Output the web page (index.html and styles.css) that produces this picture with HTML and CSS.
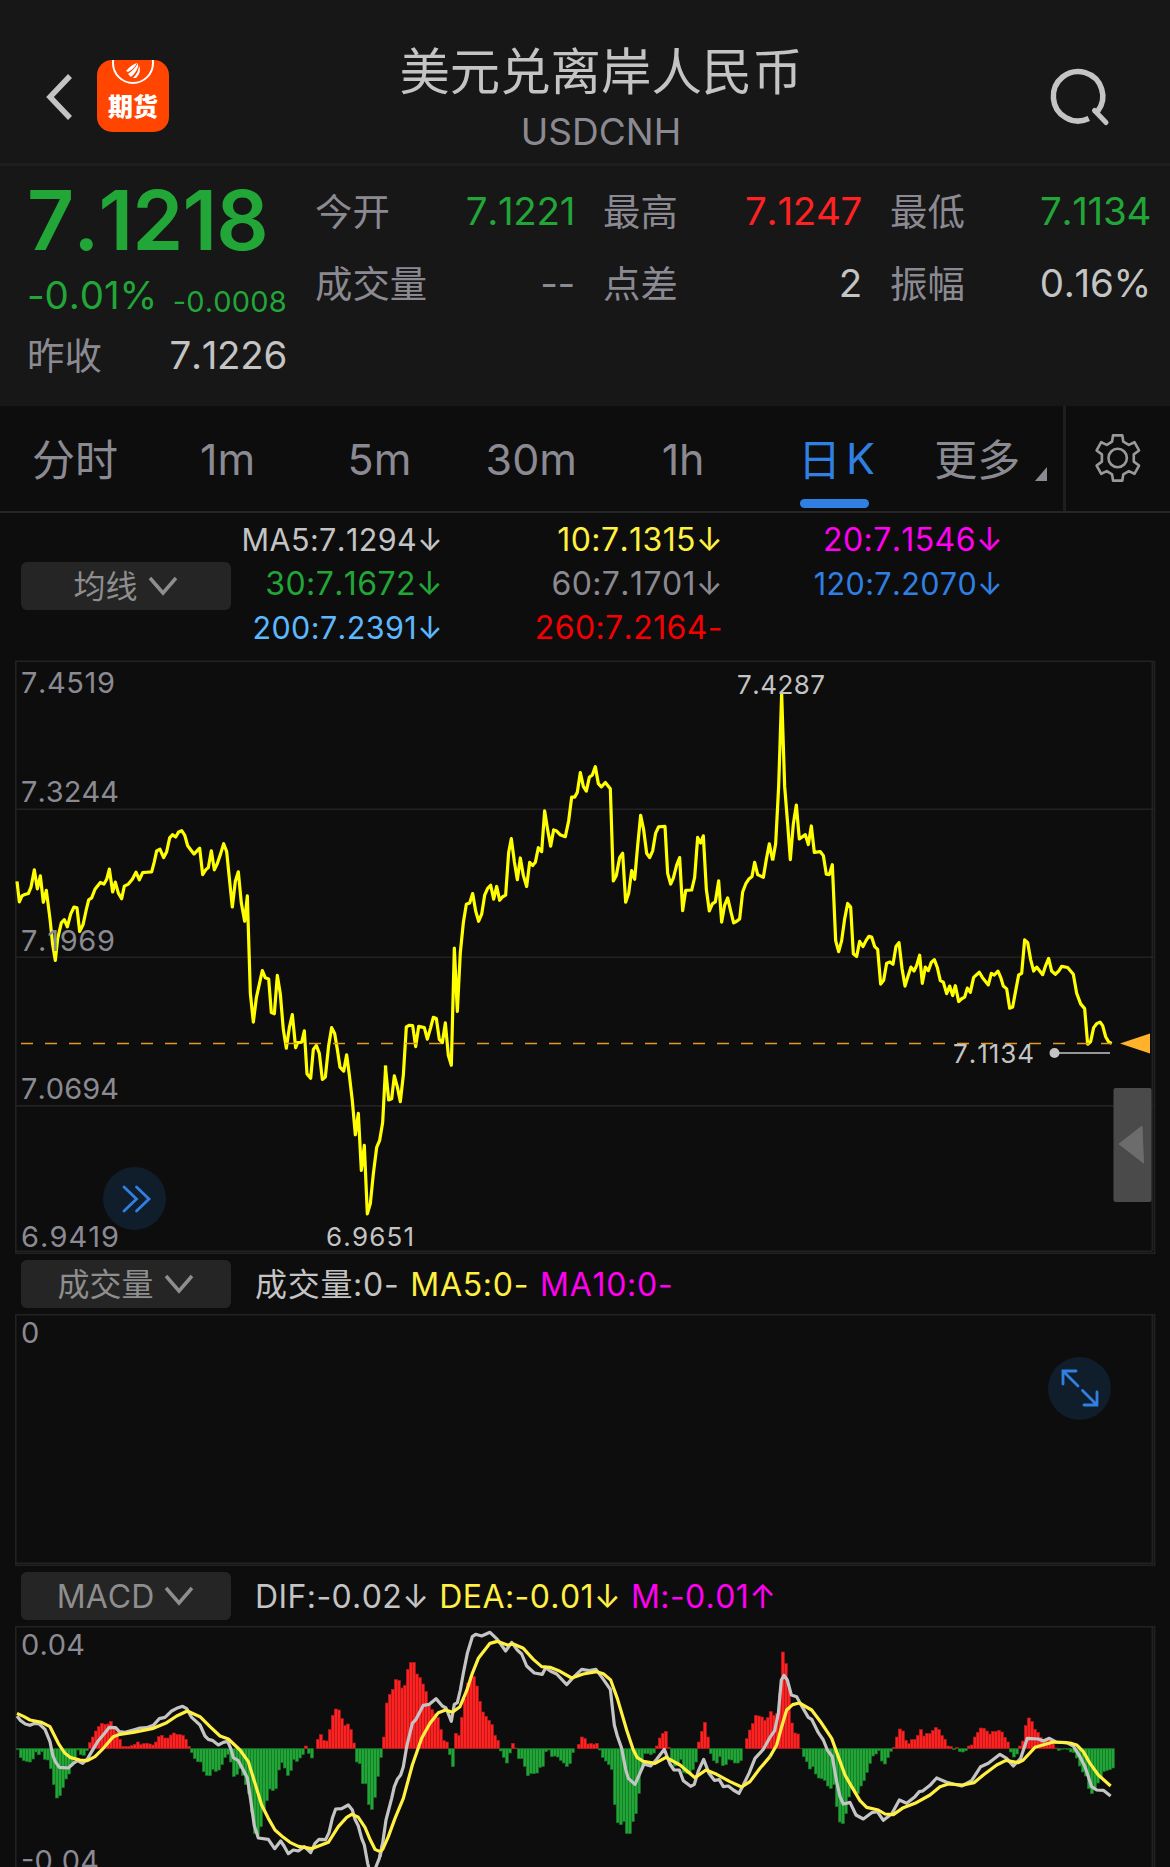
FILE: index.html
```html
<!DOCTYPE html>
<html lang="zh-CN">
<head>
    <meta charset="UTF-8">
    <meta name="viewport" content="width=device-width, initial-scale=1.0">
    <title>美元兑离岸人民币 USDCNH</title>
    <link rel="stylesheet" href="styles.css">
</head>
<body>
    <div class="header">
        <div class="header-left">
            <svg class="back" width="28" height="50" viewBox="0 0 28 50"><path d="M25 4 L5 25 L25 46"/></svg>
            <div class="logo">
                <svg width="72" height="34" viewBox="0 0 72 34">
                    <circle cx="36" cy="3" r="20" fill="none" stroke="#fff" stroke-width="2"/>
                    <path fill="#fff" d="M29 11 Q35 4 40 3 Q37 9 31 12 Z M31 14 Q38 9 41 3 Q42 10 34 17 Z M36 18 Q42 12 42 5 Q45 12 39 18 Z"/>
                </svg>
                <span>期货</span>
            </div>
        </div>
        <div class="title">
            <h1>美元兑离岸人民币</h1>
            <p>USDCNH</p>
        </div>
        <svg class="search" width="64" height="64" viewBox="0 0 64 64">
            <path d="M39.8 54.5 A24.7 24.7 0 1 1 48.5 47.5"/>
            <path d="M45.5 46.5 L57 58.5" stroke-width="5" stroke-linecap="round"/>
        </svg>
    </div>

    <div class="quote">
        <div class="quote-main">
            <div class="price">7.1218</div>
            <div class="change"><span>-0.01%</span><span class="diff">-0.0008</span></div>
            <div class="stat prev"><label>昨收</label><span>7.1226</span></div>
        </div>
        <div class="stats">
            <div class="stat"><label>今开</label><span class="green">7.1221</span></div>
            <div class="stat"><label>最高</label><span class="red">7.1247</span></div>
            <div class="stat"><label>最低</label><span class="green">7.1134</span></div>
            <div class="stat"><label>成交量</label><span class="gray">--</span></div>
            <div class="stat"><label>点差</label><span>2</span></div>
            <div class="stat"><label>振幅</label><span>0.16%</span></div>
        </div>
    </div>

    <div class="tabs">
        <div class="tab cn">分时</div>
        <div class="tab">1m</div>
        <div class="tab">5m</div>
        <div class="tab">30m</div>
        <div class="tab">1h</div>
        <div class="tab cn active"><span>日</span><span class="k">K</span></div>
        <div class="tab cn more">更多<i></i></div>
        <div class="settings">
            <svg width="48" height="52" viewBox="160 96 146 156">
                <path d="M218 105 H246 L249 124 L266 134 L283 126 L297 151 L281 163 V185 L297 197 L283 222 L266 214 L249 224 L246 243 H218 L215 224 L199 214 L182 222 L168 197 L184 185 V163 L168 151 L182 126 L199 134 L215 124 Z"/>
                <circle cx="232" cy="174" r="28"/>
            </svg>
        </div>
    </div>

    <div class="ma">
        <div class="picker"><span>均线</span><svg width="30" height="20" viewBox="0 0 30 20"><path d="M2 2 L15 17 L28 2"/></svg></div>
        <div class="ma-list">
            <span class="light fit">MA5:7.1294<b>↓</b></span>
            <span class="yellow">10:7.1315<b>↓</b></span>
            <span class="magenta">20:7.1546<b>↓</b></span>
            <span class="green">30:7.1672<b>↓</b></span>
            <span class="gray">60:7.1701<b>↓</b></span>
            <span class="blue fit">120:7.2070<b>↓</b></span>
            <span class="sky fit">200:7.2391<b>↓</b></span>
            <span class="pure-red">260:7.2164-</span>
        </div>
    </div>

    <!-- price -->
    <div class="panel price-panel">
        <svg width="1170" height="594" viewBox="0 660 1170 594">
            <g class="grid">
                <path d="M15 661.2 H1154 M15.8 661 V1253 M1152.3 661 V1251 M1154.6 661 V1254 M15 809.3 H1154 M15 957.2 H1154 M15 1105.9 H1154 M15 1251.3 H1152 M15 1253.3 H1154"/>
            </g>
            <g class="close" transform="translate(0 650) scale(.33333 .39541)">
                <polyline points="51,585 58,637 66,622 72,619 85,616 93,600 103,556 112,604 121,571 130,638 139,608 150,680 158,745 166,785 173,730 184,690 193,682 202,700 212,668 222,650 231,652 239,712 249,695 258,660 266,632 275,627 285,605 301,588 312,592 320,580 328,554 338,612 346,587 355,615 365,629 373,597 385,592 397,580 408,562 418,581 428,563 440,562 455,561 463,535 470,508 480,504 491,525 500,510 509,475 518,467 527,473 536,460 545,457 554,468 563,495 572,505 582,516 591,508 599,501 608,568 617,556 625,550 634,508 643,556 652,540 662,515 671,490 680,510 689,585 697,650 706,585 715,561 724,640 734,686 742,622 751,868 760,941 769,880 778,845 787,811 796,829 806,832 814,917 823,920 832,823 841,870 850,960 859,1007 868,955 877,922 887,1006 893,993 905,992 913,963 921,1072 932,1083 940,1010 949,1000 958,1020 967,1086 976,1080 986,1000 995,955 1004,970 1012,1010 1020,1055 1031,1065 1040,1024 1048,1075 1057,1140 1066,1226 1075,1172 1084,1316 1093,1253 1102,1426 1111,1400 1120,1325 1130,1258 1139,1240 1148,1195 1157,1051"/>
                <polyline transform="translate(1140 0)" points="16,1051 26,1138 35,1135 43,1077 52,1105 61,1142 70,1075 79,953 88,949 98,950 107,1003 116,952 133,955 142,984 152,955 160,929 169,932 178,985 187,993 196,943 205,1025 214,1050 223,754 232,914 241,765 250,690 259,643 269,640 278,616 287,660 296,686 305,668 314,620 323,603 332,595 341,630 350,598 359,633 368,624 377,620 386,512 394,477 403,535 412,581 421,526 430,570 440,598 449,537 458,545 466,537 475,500 485,510 494,407 503,455 512,496 521,455 530,458 540,467 556,472 566,432 575,372 584,372 592,360 601,310 610,345 619,357 628,322 637,316 646,295 655,338 664,346 676,335 691,351 700,584 709,570 719,525 728,514 737,638 746,615 755,558 764,580 773,495 782,418 791,455 800,514 809,525 818,508 827,463 836,447 855,446 863,565 872,592 880,577 890,544 899,525 908,659 917,608 935,607 944,575 953,474 962,488 970,470 979,605 988,660 997,642 1006,637 1016,584 1025,688 1034,645 1043,627 1052,660 1061,690 1070,686 1079,680 1088,612 1098,590 1106,580 1116,573 1124,537 1133,568 1150,575 1159,530 1168,490 1178,532"/>
                <polyline transform="translate(2310 0)" points="8,532 17,490 26,345 35,110 44,345 53,440 61,530 70,440 79,392 88,478 106,467 115,492 124,445 133,512 151,510 160,520 169,567 178,568 187,543 197,735 206,763 215,735 224,680 233,641 242,650 250,768 260,775 269,737 279,750 288,735 297,724 305,726 314,750 323,757 332,845 341,835 350,792 360,789 369,795 378,750 387,740 396,805 405,850 414,825 423,802 432,812 440,798 449,772 457,843 466,802 475,811 484,790 493,783 502,803 511,836 520,840 530,869 539,850 548,874 556,849 566,889 575,882 584,878 592,855 601,866 611,828 628,815 637,828 655,847 664,818 673,822 684,812 693,830 700,850 710,857 719,906 728,903 737,862 746,822 755,818 764,733 773,740 782,783 791,812 800,802 818,821 827,798 836,780 845,812 856,820 866,812 875,800 893,803 910,820 920,868 932,895 944,907 953,997 962,990 971,955 980,945 990,941 998,950 1007,978 1016,991 1025,995"/>
            </g>
            <path class="last-line" d="M21 1043.5 H1112"/>
            <path d="M1120 1043.5 L1150 1033.5 V1053.5 Z" fill="#ffb22a"/>
            <g class="axis">
                <text x="21" y="693" textLength="94">7.4519</text>
                <text x="21" y="802" textLength="98">7.3244</text>
                <text x="21" y="951" textLength="94">7.1969</text>
                <text x="21" y="1099" textLength="98">7.0694</text>
                <text x="21" y="1247" textLength="98">6.9419</text>
            </g>
            <g class="mark">
                <text x="737" y="694" textLength="88">7.4287</text>
                <text x="326" y="1246" textLength="88">6.9651</text>
                <text x="953" y="1063" textLength="81">7.1134</text>
                <circle cx="1054.5" cy="1053" r="5"/>
                <path d="M1054 1053 H1110"/>
            </g>
            <rect x="1113.5" y="1088" width="38" height="114" rx="2" fill="#4a4a4a"/>
            <path d="M1119 1144 L1142 1126 L1143.5 1163 Z" fill="#6c6c6c" stroke="#6c6c6c" stroke-linejoin="round"/>
        </svg>
        <div class="round-btn forward">
            <svg width="63" height="63" viewBox="0 0 63 63"><path d="M21 20 L33.5 32 L21 44 M33.5 20 L46 32 L33.5 44"/></svg>
        </div>
    </div>

    <!-- volume -->
    <div class="row">
        <div class="picker"><span>成交量</span><svg width="30" height="20" viewBox="0 0 30 20"><path d="M2 2 L15 17 L28 2"/></svg></div>
        <div class="legend vol"><span class="light">成交量:0-</span><span class="yellow">MA5:0-</span><span class="magenta">MA10:0-</span></div>
    </div>
    <div class="panel">
        <svg width="1170" height="252" viewBox="0 1314 1170 252">
            <g class="grid"><path d="M15 1314.8 H1154 M15.8 1314 V1566 M1152.3 1315 V1564 M1154.6 1314 V1566 M15 1563.3 H1152 M15 1565.3 H1154"/></g>
            <g class="axis"><text x="21" y="1343">0</text></g>
        </svg>
        <div class="round-btn expand">
            <svg width="63" height="63" viewBox="0 0 63 63"><path d="M30 29 L15 14 M15 27 V14 H28 M34.5 33.5 L49 48 M49 35 V48 H36"/></svg>
        </div>
    </div>

    <!-- macd -->
    <div class="row">
        <div class="picker"><span class="en">MACD</span><svg width="30" height="20" viewBox="0 0 30 20"><path d="M2 2 L15 17 L28 2"/></svg></div>
        <div class="legend"><span class="light">DIF:-0.02<b>↓</b></span><span class="yellow">DEA:-0.01<b>↓</b></span><span class="magenta">M:-0.01<b>↑</b></span></div>
    </div>
    <div class="panel">
        <svg width="1170" height="241" viewBox="0 1626 1170 241">
            <g class="grid"><path d="M15 1626.7 H1154 M15.8 1626 V1867 M1152.3 1627 V1867 M1154.6 1626 V1867"/></g>
            <g class="axis">
                <text x="21" y="1655" textLength="64">0.04</text>
                <text x="21" y="1871" textLength="78">-0.04</text>
            </g>
            <g transform="translate(0 1610) scale(.33333)">
                <g id="bars"></g>
                <g class="dif">
                    <polyline points="51,318 62,332 76,342 90,346 104,340 118,342 135,358 150,395 158,435 166,455 178,472 205,474 220,460 232,452 248,460 262,447 275,425 295,392 315,368 328,352 347,353 358,365 375,367 400,360 420,354 440,353 460,346 478,326 495,322 515,303 530,295 548,289 560,296 575,322 600,345 615,378 625,388 637,391 655,405 670,397 683,394 692,415 700,443 715,452 727,475 742,503 752,570 763,648 775,684 805,688 824,716 842,693 852,708 865,731 880,720 895,723 913,710 932,728 945,700 957,688 977,689 987,668 997,625 1007,597 1025,596 1045,585 1057,600 1065,628 1075,648 1085,685 1093,705 1103,760 1112,795 1122,785 1138,745 1148,700"/>
                    <polyline transform="translate(1140 0)" points="0,740 8,700 18,630 35,565 43,530 52,508 62,495 70,470 80,410 97,340 108,328 130,286 148,283 168,266 187,288 198,294 214,334 223,283 232,278 241,240 250,190 262,130 277,80 287,73 305,78 330,67 352,88 377,123 395,97 412,120 425,132 440,168 463,189 487,193 497,173 512,184 530,192 560,224 580,202 605,178 628,182 648,178 668,205 691,238 703,345 712,378 725,415 737,478 745,505 765,523 782,485 792,462 812,468 830,448 853,418 870,462 882,480 898,480 910,512 932,529 943,523 955,483 971,448 987,490 1003,511 1018,509 1030,530 1045,528 1060,540 1077,550 1090,525 1107,490 1125,445 1150,418 1170,382"/>
                    <polyline transform="translate(2310 0)" points="0,382 14,362 25,310 34,210 42,196 52,210 64,255 80,260 95,288 115,322 125,328 145,368 160,390 172,420 187,440 200,515 210,560 220,582 240,577 258,615 280,627 305,608 322,605 340,631 365,612 388,570 410,580 435,560 448,545 458,543 480,526 500,504 530,517 575,528 605,512 632,470 655,460 690,433 710,445 730,468 752,445 772,385 805,387 820,393 838,385 858,396 890,398 910,408 930,440 945,470 965,530 980,540 1000,541 1022,558"/>
                </g>
                <g class="dea">
                    <polyline points="51,310 72,320 90,330 125,337 150,350 175,400 195,430 212,443 240,450 262,452 285,440 310,415 340,380 360,373 400,367 460,355 500,338 530,318 562,303 600,320 630,350 660,378 685,387 720,420 745,455 765,520 785,585 805,625 825,660 850,682 870,697 895,709 935,716 985,697 1015,650 1040,622 1055,613 1075,622 1095,652 1110,688 1125,718 1140,725"/>
                    <polyline transform="translate(1140 0)" points="0,725 8,718 25,680 45,625 70,565 97,465 125,385 150,340 175,308 197,300 217,307 240,290 260,242 277,190 295,145 330,100 352,94 382,105 400,102 430,115 460,148 485,170 510,172 540,184 575,204 610,192 650,185 670,191 692,210 712,265 740,360 760,420 772,443 790,454 825,460 858,442 900,465 945,503 978,480 1010,493 1050,515 1085,531 1110,515 1140,475 1170,440"/>
                    <polyline transform="translate(2310 0)" points="0,440 20,405 35,350 50,300 68,284 88,279 125,300 155,340 185,385 205,440 225,495 245,530 270,572 290,592 325,600 345,612 370,614 400,593 435,580 480,555 510,530 535,522 580,525 612,518 640,495 680,465 708,451 745,458 760,450 795,412 850,396 900,399 920,405 940,425 960,460 985,495 1022,528"/>
                </g>
            </g>
        </svg>
    </div>

    <script>
        // one histogram value per day, oldest first
        const macd = [
            -3, -27, -36, -38, -40, -31, -10, -18, -9, -32, -34, -60, -108, -148, -141, -117, -91, -76, -52, -28,
            -4, -18, -20, -6, 18, 35, 53, 66, 76, 73, 74, 82, 60, 50, 28, 7, 7, 7, 9, 13,
            20, 12, 15, 16, 14, 11, 20, 36, 40, 32, 32, 41, 47, 43, 42, 40, 28, 7, -12, -30,
            -39, -40, -69, -80, -81, -62, -68, -64, -48, -26, -17, -40, -83, -77, -60, -80, -108, -135, -190, -254,
            -258, -234, -180, -156, -121, -126, -120, -64, -42, -58, -80, -65, -32, -38, -28, -18, 8, -14, -28, 0,
            28, 42, 25, 23, 57, 100, 119, 116, 90, 69, 74, 57, 17, -40, -45, -105, -105, -168, -182, -146,
            -83, -26, 35, 137, 163, 178, 207, 205, 182, 190, 238, 258, 259, 224, 213, 194, 171, 130, 117, 105,
            93, 57, 24, 20, -18, -54, 46, 40, 94, 150, 197, 215, 216, 188, 142, 110, 97, 85, 72, 40,
            25, -7, -26, -43, -13, 16, 2, -30, -30, -53, -81, -74, -75, -73, -56, -53, -9, -4, -24, -22,
            -25, -35, -43, -53, -45, -12, 0, 13, 35, 30, 14, 15, 13, 16, -4, -26, -37, -48, -62, -168,
            -222, -228, -218, -254, -255, -219, -195, -134, -60, -15, -15, -18, -13, 8, 32, 46, 52, 4, -40, -52,
            -50, -32, -72, -75, -75, -63, -40, 20, 52, 79, 35, -15, -36, -43, -24, -51, -48, -32, -34, -43,
            -43, -36, 0, 30, 56, 75, 100, 98, 95, 85, 93, 111, 100, 106, 165, 290, 255, 180, 77, 47,
            44, 1, -24, -39, -61, -54, -76, -88, -90, -95, -112, -119, -108, -174, -220, -225, -195, -145, -120, -130,
            -135, -112, -96, -71, -44, -22, -16, -6, -37, -46, -27, -8, 4, 35, 59, 53, 25, 15, 27, 28,
            40, 57, 38, 46, 45, 54, 63, 57, 39, 28, 8, 6, -3, 3, -9, -10, -6, 8, 11, 35,
            49, 62, 61, 53, 44, 52, 52, 55, 50, 34, 20, -10, -25, -16, 8, 23, 69, 92, 81, 58,
            49, 34, 28, 30, 27, 16, 2, -5, -2, -1, -2, -10, -12, -28, -52, -70, -82, -120, -135, -122,
            -103, -85, -68, -65, -63, -58
        ];
        const zero = 416;
        document.getElementById('bars').innerHTML = macd.map((v, i) => {
            const y = v > 0 ? zero - v : zero;
            return `<rect class="${v > 0 ? 'up' : 'down'}" x="${49 + i * 9}" y="${y}" width="9" height="${Math.abs(v)}"/>`;
        }).join('');
    </script>
</body>
</html>
```
FILE: styles.css
```css
* {
    box-sizing: border-box;
}
body {
    margin: 0;
    width: 1170px;
    height: 1867px;
    overflow: hidden;
    background: #0d0d0d;
    color: #c4c4c4;
    font-family: Inter, "Noto Sans CJK SC", sans-serif;
    font-kerning: none;
}
svg {
    display: block;
    fill: none;
}
.green { color: #21a637; }
.red { color: #ff2222; }
.pure-red { color: #f50000; }
.gray { color: #8b8a92; }
.light { color: #c4c4c4; }
.yellow { color: #fff042; }
.magenta { color: #ff00f0; }
.blue { color: #3080e3; }
.sky { color: #5cb8ff; }

.header {
    display: grid;
    grid-template-columns: 200px 1fr 200px;
    height: 166px;
    background: #171717;
    border-bottom: 3px solid #1e1e1e;
}
.header-left {
    display: flex;
    align-items: flex-start;
    padding: 60px 0 0 45px;
    gap: 24px;
}
.back {
    margin-top: 12px;
    stroke: #c4c4c4;
    stroke-width: 5.5;
}
.logo {
    width: 72px;
    height: 72px;
    border-radius: 15px;
    background: #ff4500;
    color: #fff;
    overflow: hidden;
    text-align: center;
    font-size: 25px;
    font-weight: 900;
    line-height: 27px;
}
.title {
    text-align: center;
    padding: 36px 0 0 32px;
}
.title h1 {
    margin: 0;
    font-size: 50.4px;
    font-weight: 400;
    line-height: 72px;
}
.title p {
    margin: 0;
    font-size: 37px;
    line-height: 47px;
    color: #8b8a92;
}
.search {
    margin: 64px 0 0 79px;
    stroke: #c4c4c4;
    stroke-width: 5.5;
}

.quote {
    display: flex;
    height: 240px;
    background: #171717;
}
.quote-main {
    width: 316px;
    padding: 14px 29px 0 27px;
    color: #21a637;
}
.price {
    font-size: 82px;
    font-weight: 600;
    line-height: 82px;
    letter-spacing: -0.9px;
}
.change {
    display: flex;
    justify-content: space-between;
    align-items: baseline;
    font-size: 38.5px;
    line-height: 66px;
    letter-spacing: -0.1px;
}
.diff {
    font-size: 29px;
    letter-spacing: 0.2px;
    position: relative;
    top: 3px;
}
.stat {
    display: flex;
    justify-content: space-between;
    align-items: center;
    height: 72px;
    font-size: 38.5px;
    letter-spacing: -0.3px;
    color: #c4c4c4;
}
.stat label {
    font-size: 37.4px;
    color: #8b8a92;
    letter-spacing: 0;
    margin: -3px 0 0 -1px;
}
.prev {
    height: 56px;
    margin-top: -5px;
}
.prev label {
    margin-left: 0;
}
.stats {
    display: grid;
    grid-template-columns: 259px 258px 260px;
    grid-auto-rows: 72px;
    column-gap: 29px;
    padding-top: 9px;
}

.tabs {
    display: grid;
    grid-template-columns: repeat(7, 151.8px) 107.4px;
    height: 107px;
    border-bottom: 2px solid #262626;
    color: #8b8a92;
    font-size: 43px;
}
.tab {
    display: flex;
    align-items: center;
    justify-content: center;
    position: relative;
}
.tab.cn {
    padding-bottom: 4px;
}
.tab:first-child {
    padding-right: 2px;
}
.tab.active {
    color: #3080e3;
    gap: 5px;
    padding-left: 3px;
}
.tab.active::after {
    content: "";
    position: absolute;
    left: 41px;
    bottom: 3px;
    width: 69px;
    height: 9px;
    border-radius: 4.5px;
    background: #3080e3;
}
.k {
    padding-top: 3px;
}
.tab.more {
    padding-right: 19px;
}
.more i {
    position: absolute;
    right: 16px;
    top: 61px;
    border-left: 12px solid transparent;
    border-bottom: 14px solid #8b8a92;
}
.settings {
    border-left: 3px solid #1e1e1e;
    padding: 26px 0 0 28px;
}
.settings svg {
    stroke: #999;
    stroke-width: 8;
    stroke-linejoin: round;
}

.ma {
    display: flex;
    height: 147px;
    padding: 5px 0 0 21px;
}
.ma .picker {
    margin-top: 44px;
}
.picker {
    display: flex;
    align-items: center;
    justify-content: center;
    gap: 10px;
    width: 210px;
    height: 48px;
    border-radius: 6px;
    padding-right: 1px;
    background: #252525;
    color: #8e8e8e;
    font-size: 32px;
}
.picker span {
    margin-top: -4px;
}
.picker .en {
    margin-top: 0;
}
.picker svg {
    stroke: #8e8e8e;
    stroke-width: 3.5;
}
.ma-list {
    display: grid;
    grid-template-columns: 212px 280px 280px;
    grid-auto-rows: 43.7px;
    align-items: center;
    justify-items: end;
    font-size: 32px;
    letter-spacing: 0.4px;
}
.ma-list .fit {
    font-size: 30.5px;
    letter-spacing: 0.4px;
}
b {
    font-weight: 400;
}

.panel {
    position: relative;
}
.grid {
    stroke: #222;
    stroke-width: 1.6;
}
.close {
    stroke: #ffff00;
    stroke-width: 3.2;
}
.close polyline, .dif polyline, .dea polyline {
    vector-effect: non-scaling-stroke;
    stroke-linejoin: round;
}
.last-line {
    stroke: #e39a22;
    stroke-width: 1.6;
    stroke-dasharray: 12 12;
}
.axis {
    fill: #8b8a92;
    font-size: 29px;
}
.mark {
    fill: #c4c4c4;
    font-size: 26px;
}
.mark path {
    stroke: #c4c4c4;
    stroke-width: 1.6;
}
.round-btn {
    position: absolute;
    width: 63px;
    height: 63px;
    border-radius: 50%;
    background: #101d2b;
}
.round-btn svg {
    stroke: #3080e3;
    stroke-width: 2.8;
    stroke-linecap: round;
}
.forward {
    left: 103px;
    top: 507px;
}
.expand {
    left: 1048px;
    top: 43px;
}

.row {
    display: flex;
    align-items: center;
    height: 60px;
    padding-left: 21px;
}
.legend {
    display: flex;
    align-items: baseline;
    gap: 10px;
    margin-left: 24px;
    font-size: 32px;
    letter-spacing: 0.4px;
}
.legend.vol {
    margin-top: -4px;
    gap: 11px;
    letter-spacing: 0.7px;
}
.dif {
    stroke: #c4c4c4;
    stroke-width: 3.2;
}
.dea {
    stroke: #fff042;
    stroke-width: 3.2;
}
.up {
    fill: #ff2222;
    stroke: #b01a1a;
    stroke-width: 2;
}
.down {
    fill: #21a637;
    stroke: #177526;
    stroke-width: 2;
}
```
